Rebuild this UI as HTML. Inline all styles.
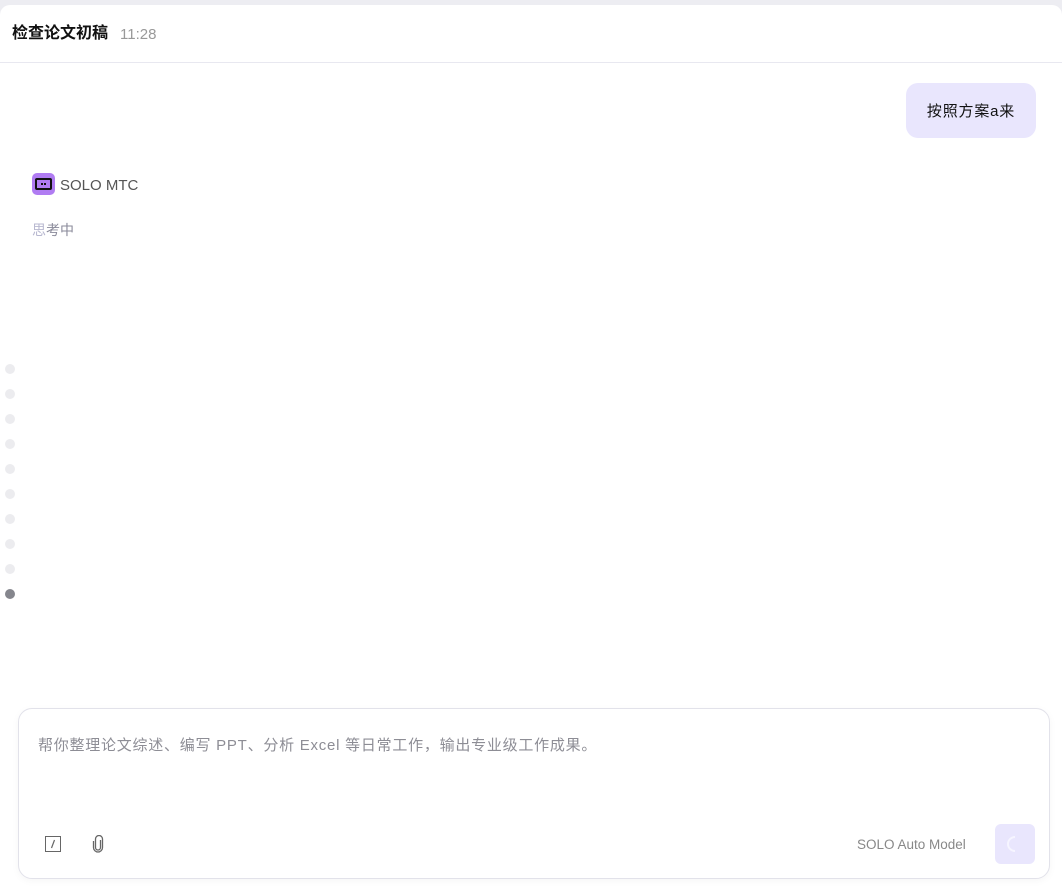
<!DOCTYPE html>
<html><head><meta charset="utf-8"><style>
*{margin:0;padding:0;box-sizing:border-box}
body{width:1062px;height:886px;background:#ededf2;font-family:"Liberation Sans","Noto Sans CJK SC",sans-serif;position:relative;overflow:hidden}
.panel{position:absolute;left:0;top:5px;width:1062px;height:881px;background:#fff;border-radius:10px 10px 0 0}
.hdr{position:absolute;left:0;top:5px;width:1062px;height:58px;border-bottom:1px solid #e8e8f0}
.title{position:absolute;left:12px;top:24px;font-size:16px;font-weight:bold;color:#111;line-height:20px}
.time{position:absolute;left:120px;top:26px;font-size:15px;color:#999;line-height:18px}
.bubble{position:absolute;left:906px;top:83px;width:130px;height:55px;background:#e9e6fd;border-radius:12px;font-size:15px;color:#111;line-height:57px;text-align:center;letter-spacing:0.8px}
.icon{position:absolute;left:32px;top:173px;width:23px;height:22px;background:#b07cf2;border-radius:5px}
.name{position:absolute;left:60px;top:177px;font-size:15px;color:#555}
.think{position:absolute;left:32px;top:220px;font-size:14px;color:#8a8a9a}
.dot{position:absolute;left:5px;width:10px;height:10px;border-radius:50%;background:#ececef}
.box{position:absolute;left:18px;top:708px;width:1032px;height:171px;border:1px solid #e2e2ea;border-radius:14px;background:#fff;box-shadow:0 2px 8px rgba(0,0,0,.04)}
.ph{position:absolute;left:38px;top:734px;font-size:15px;color:#8d8d95;letter-spacing:0.75px}
.model{position:absolute;left:857px;top:837px;font-size:13.5px;color:#888}
.send{position:absolute;left:995px;top:824px;width:40px;height:40px;background:#e9e6fd;border-radius:6px}
</style></head><body>
<div class="panel"></div>
<div class="hdr"></div>
<div class="title">检查论文初稿</div>
<div class="time">11:28</div>
<div class="bubble">按照方案a来</div>
<div class="icon"><svg width="23" height="22" viewBox="0 0 23 22"><rect x="4" y="6" width="15" height="10" rx="1" fill="none" stroke="#111" stroke-width="2"/><rect x="9" y="10" width="2" height="2" fill="#111"/><rect x="12" y="10" width="2" height="2" fill="#111"/></svg></div>
<div class="name">SOLO MTC</div>
<div class="think"><span style="color:#b8b8d0">思</span>考中</div>
<div class="dot" style="top:364px"></div>
<div class="dot" style="top:389px"></div>
<div class="dot" style="top:414px"></div>
<div class="dot" style="top:439px"></div>
<div class="dot" style="top:464px"></div>
<div class="dot" style="top:489px"></div>
<div class="dot" style="top:514px"></div>
<div class="dot" style="top:539px"></div>
<div class="dot" style="top:564px"></div>
<div class="dot" style="top:589px;background:#85868d"></div>
<div class="box"></div>
<div class="ph">帮你整理论文综述、编写 PPT、分析 Excel 等日常工作，输出专业级工作成果。</div>
<svg style="position:absolute;left:45px;top:836px" width="16" height="16" viewBox="0 0 16 16"><rect x="0.5" y="0.5" width="15" height="15" fill="none" stroke="#666"/><path d="M9.5 4L6.5 12" stroke="#666" stroke-width="1.2"/></svg>
<svg style="position:absolute;left:91px;top:835px" width="14" height="18" viewBox="0 0 14 18"><path d="M9.5 5v7.5a2.5 2.5 0 0 1-5 0V4a3.5 3.5 0 0 1 7 0v8.5a4.5 4.5 0 0 1-9 0V6" fill="none" stroke="#666" stroke-width="1.3"/></svg>
<div class="model">SOLO Auto Model</div>
<div class="send"><svg width="40" height="40" viewBox="0 0 40 40"><path d="M20 13a7 7 0 0 0 0 14" fill="none" stroke="#f6f5ff" stroke-width="2"/></svg></div>
</body></html>
